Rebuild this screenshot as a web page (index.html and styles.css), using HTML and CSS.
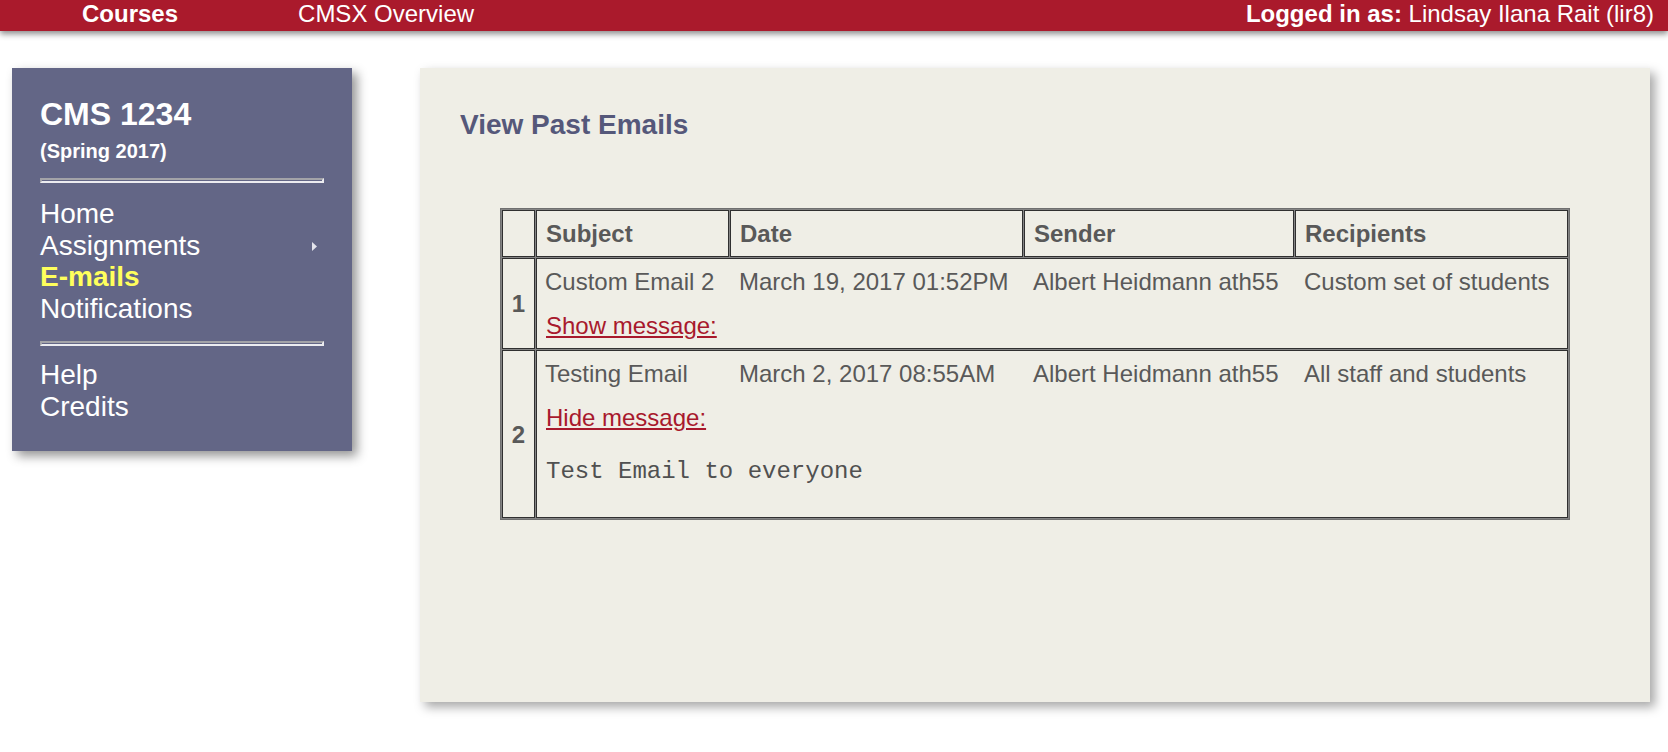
FILE: index.html
```html
<!DOCTYPE html>
<html lang="en">
<head>
<meta charset="utf-8">
<title>View Past Emails - CMS 1234</title>
<link rel="stylesheet" href="styles.css">
</head>
<body>
<header class="topbar">
  <nav class="topnav">
    <a class="topnav-item topnav-item--strong" href="#">Courses</a>
    <a class="topnav-item topnav-item--spaced" href="#">CMSX Overview</a>
  </nav>
  <div class="user"><b>Logged in as:</b> Lindsay Ilana Rait (lir8)</div>
</header>

<div class="layout">
  <aside class="sidebar">
    <div class="course-code">CMS 1234</div>
    <div class="course-term">(Spring 2017)</div>
    <div class="rule"></div>
    <ul class="menu">
      <li><a class="menu-link" href="#">Home</a></li>
      <li class="menu-row"><a class="menu-link" href="#">Assignments</a><svg class="menu-arrow" width="5" height="9" viewBox="0 0 5 9"><path d="M0 0 L5 4.5 L0 9 Z" fill="#e4e4ec"/></svg></li>
      <li><a class="menu-link menu-link--active" href="#">E-mails</a></li>
      <li><a class="menu-link" href="#">Notifications</a></li>
    </ul>
    <div class="rule rule--second"></div>
    <ul class="menu menu--help">
      <li><a class="menu-link" href="#">Help</a></li>
      <li><a class="menu-link" href="#">Credits</a></li>
    </ul>
  </aside>

  <main class="panel">
    <h2 class="panel-title">View Past Emails</h2>
    <div class="emails">
      <div class="cell head head--index"></div>
      <div class="cell head">Subject</div>
      <div class="cell head">Date</div>
      <div class="cell head">Sender</div>
      <div class="cell head">Recipients</div>

      <div class="cell index index--r1">1</div>
      <div class="cell group group--r1"></div>
      <div class="field field--r1 col-2">Custom Email 2</div>
      <div class="field field--r1 col-3">March 19, 2017 01:52PM</div>
      <div class="field field--r1 col-4">Albert Heidmann ath55</div>
      <div class="field field--r1 col-5">Custom set of students</div>
      <div class="body body--r1"><a class="toggle" href="#">Show message:</a></div>

      <div class="cell index index--r2">2</div>
      <div class="cell group group--r2"></div>
      <div class="field field--r2 col-2">Testing Email</div>
      <div class="field field--r2 col-3">March 2, 2017 08:55AM</div>
      <div class="field field--r2 col-4">Albert Heidmann ath55</div>
      <div class="field field--r2 col-5">All staff and students</div>
      <div class="body body--r2"><a class="toggle" href="#">Hide message:</a><pre class="message">Test Email to everyone</pre></div>
    </div>
  </main>
</div>
</body>
</html>
```

FILE: styles.css
```css
html, body {
  margin: 0;
  padding: 0;
  background: #ffffff;
}

body {
  font-family: "Liberation Sans", Arial, Helvetica, sans-serif;
}

/* ---------- top bar ---------- */
.topbar {
  display: flex;
  justify-content: space-between;
  height: 31px;
  padding: 0 14px 0 82px;
  background: #aa1a2c;
  color: #ffffff;
  font-size: 24px;
  line-height: 28px;
  box-shadow: 0 3px 6px rgba(0, 0, 0, 0.45);
  position: relative;
  z-index: 2;
}

.topnav {
  display: flex;
}

.topnav-item {
  color: #ffffff;
  text-decoration: none;
}

.topnav-item--strong {
  font-weight: bold;
}

.topnav-item--spaced {
  margin-left: 120px;
}

.user b {
  font-weight: bold;
}

/* ---------- layout ---------- */
.layout {
  display: flex;
  align-items: flex-start;
  padding: 37px 0 24px 12px;
}

/* ---------- sidebar ---------- */
.sidebar {
  width: 340px;
  box-sizing: border-box;
  padding: 28px 28px 29px 28px;
  background: #636686;
  color: #ffffff;
  box-shadow: 5px 5px 10px rgba(0, 0, 0, 0.42);
}

.course-code {
  font-size: 32px;
  font-weight: bold;
  line-height: 36px;
}

.course-term {
  margin-top: 8px;
  font-size: 20px;
  font-weight: bold;
  line-height: 23px;
}

.rule {
  height: 1px;
  margin: 15px 0 15px 0;
  border-top: 2px solid #a3a3a8;
  border-left: 2px solid #a3a3a8;
  border-bottom: 2px solid #ececf0;
  border-right: 2px solid #ececf0;
  box-sizing: content-box;
}

.rule--second {
  margin: 16px 0 13px 0;
}

.menu {
  list-style: none;
  margin: 0;
  padding: 0;
  font-size: 28px;
  line-height: 31.7px;
}

.menu-row {
  display: flex;
  justify-content: space-between;
  align-items: center;
}

.menu-arrow {
  margin-right: 7px;
  margin-top: 2px;
}

.menu-link {
  color: #ffffff;
  text-decoration: none;
}

.menu-link--active {
  color: #ffff5c;
  font-weight: bold;
}

/* ---------- main panel ---------- */
.panel {
  width: 1230px;
  height: 634px;
  box-sizing: border-box;
  margin-left: 68px;
  padding: 41px 40px 40px 40px;
  background: #efeee6;
  box-shadow: 5px 5px 10px rgba(0, 0, 0, 0.35);
}

.panel-title {
  margin: 0;
  font-size: 28px;
  line-height: 32px;
  font-weight: bold;
  color: #55587a;
}

/* ---------- emails table ---------- */
.emails {
  display: grid;
  grid-template-columns: 33px 193px 293px 270px 273px;
  gap: 1px;
  width: fit-content;
  margin: 67px auto 0 auto;
  padding: 1px;
  border: 1px solid #707070;
  background: #858585;
  color: #595959;
  font-size: 24px;
  line-height: 28px;
}

.cell {
  border: 1px solid #303030;
  background: #efeee6;
}

.head {
  padding: 9px 9px 8px 9px;
  font-weight: bold;
  white-space: nowrap;
}

.index {
  grid-column: 1;
  display: flex;
  align-items: center;
  justify-content: center;
  padding-top: 1px;
  font-weight: bold;
}

.index--r1 { grid-row: 2 / 4; }
.index--r2 { grid-row: 4 / 6; }

.group {
  grid-column: 2 / 6;
}

.group--r1 { grid-row: 2 / 4; }
.group--r2 { grid-row: 4 / 6; }

.field {
  padding: 10px 0 0 9px;
  white-space: nowrap;
}

.field--r1 { grid-row: 2; }
.field--r2 { grid-row: 4; }

.col-2 { grid-column: 2; }
.col-3 { grid-column: 3; }
.col-4 { grid-column: 4; }
.col-5 { grid-column: 5; }

.body {
  grid-column: 2 / 6;
  padding: 15px 0 9px 10px;
}

.body--r1 { grid-row: 3; }
.body--r2 { grid-row: 5; }

.toggle {
  color: #a8192d;
  text-decoration: underline;
}

.message {
  margin: 26px 0 24px 0;
  font-family: "Liberation Mono", "Courier New", monospace;
  font-size: 24px;
  line-height: 27px;
  color: #505050;
}
```
